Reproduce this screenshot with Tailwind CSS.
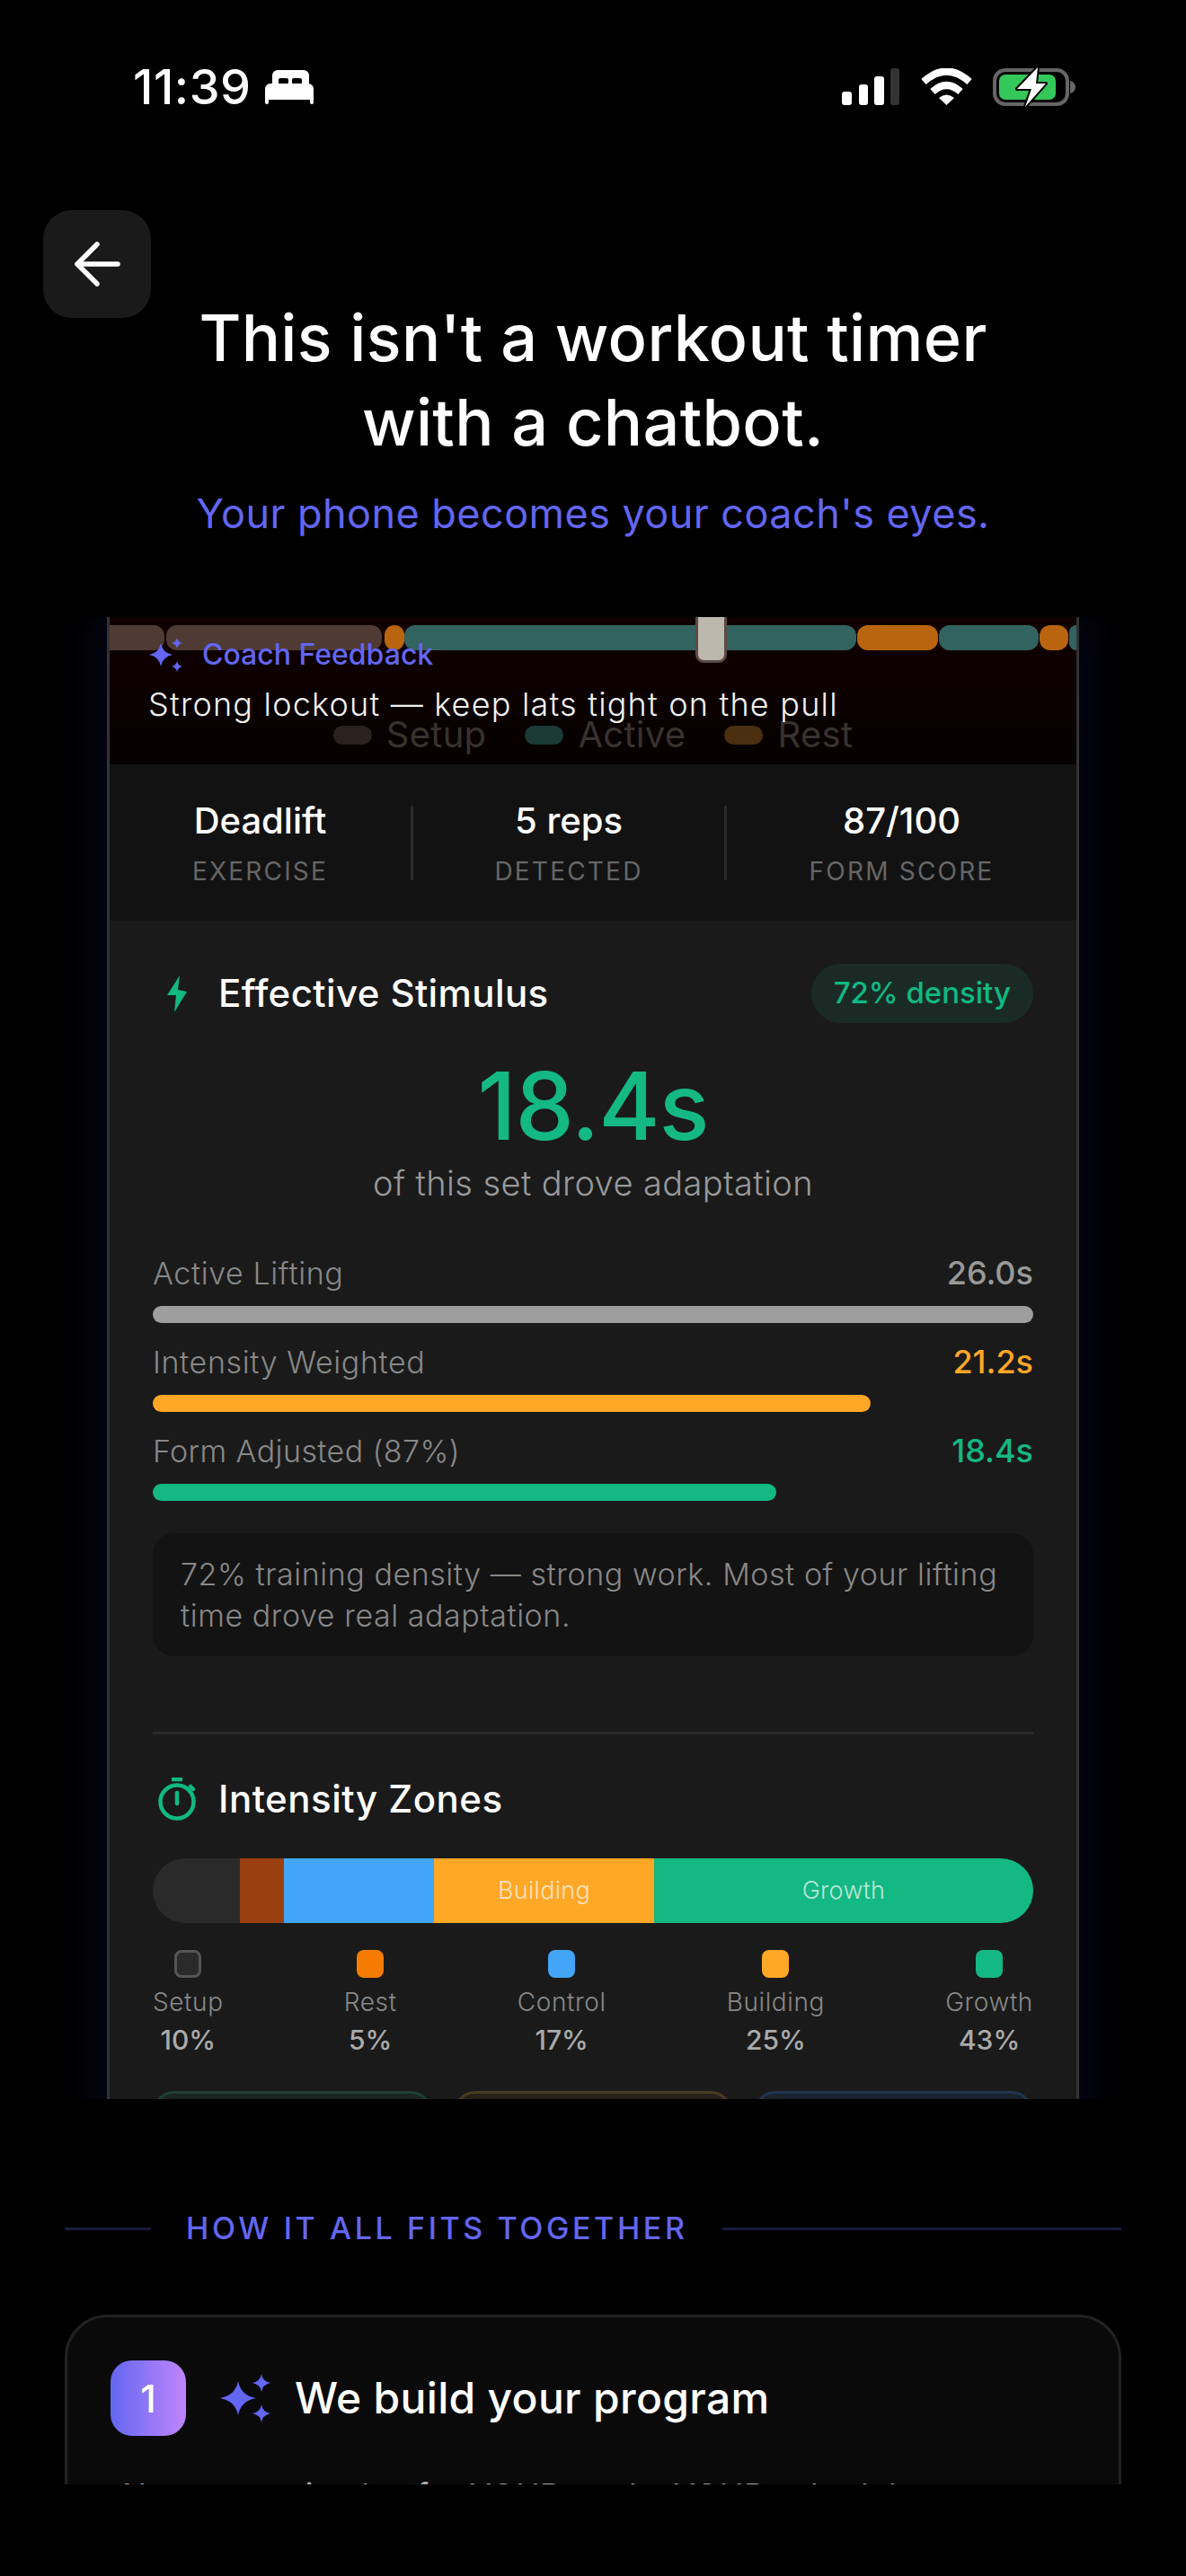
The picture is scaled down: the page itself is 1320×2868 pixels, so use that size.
<!DOCTYPE html>
<html lang="en">
<head>
    <meta charset="UTF-8">
    <title>How it works</title>
    <script src="https://cdn.jsdelivr.net/npm/@tailwindcss/browser@4"></script>
</head>
<body class="bg-black w-[1320px] h-[2868px] overflow-hidden [font-family:Inter,sans-serif] text-white">
<div class="h-[2766px] overflow-hidden">

    <!-- status bar -->
    <div class="flex items-center justify-between h-[41px] mt-[76px] pl-[148px] pr-[122px]">
        <div class="flex items-center gap-[15px]">
            <span class="text-[54px] leading-[41px] font-medium tracking-[0.500px]">11:39</span>
            <svg width="54" height="38" viewBox="0 0 54 38" fill="#fff">
                <path d="M8 17V6a6 6 0 0 1 6-6h29a6 6 0 0 1 6 6v11z"/>
                <rect x="15" y="9" width="11" height="7" rx="2" fill="#000"/>
                <rect x="30" y="9" width="11" height="7" rx="2" fill="#000"/>
                <path d="M6 15h42a6 6 0 0 1 6 6v15a2 2 0 0 1-4 0v-3H4v3a2 2 0 0 1-4 0V21a6 6 0 0 1 6-6z"/>
            </svg>
        </div>
        <div class="flex items-center">
            <svg width="64" height="41" viewBox="0 0 64 41" fill="#fff">
                <rect x="0" y="26" width="11" height="15" rx="3"/>
                <rect x="19" y="18" width="10" height="23" rx="3"/>
                <rect x="36" y="9" width="11" height="32" rx="3"/>
                <rect x="54" y="0" width="10" height="41" rx="3" fill="#333"/>
            </svg>
            <svg class="ml-[24px]" width="57" height="41" viewBox="0 0 57 41" fill="none" stroke="#fff" stroke-width="8">
                <path d="M3 15Q28.500 -8 54 15"/>
                <path d="M13 26Q28.500 12 44 26"/>
                <path d="M20 33Q28.500 26 37 33L28.500 41Z" fill="#fff" stroke="none"/>
            </svg>
            <svg class="ml-[23px]" width="93" height="46" viewBox="0 0 93 46">
                <rect x="2" y="4" width="81" height="38" rx="12" fill="none" stroke="#666" stroke-width="4"/>
                <rect x="7" y="9" width="63" height="28" rx="7" fill="#34c759"/>
                <path d="M86 16c4 1 6 4 6 7s-2 6-6 7z" fill="#666"/>
                <path d="M50 1L27 25H43L36 45L59 19H48Z" fill="#fff" stroke="#000" stroke-width="4" stroke-linejoin="round" paint-order="stroke"/>
            </svg>
        </div>
    </div>

    <!-- back button + heading -->
    <button class="flex items-center justify-center w-[120px] h-[120px] ml-[48px] mt-[117px] rounded-[32px] bg-[#1a1a1a]">
        <svg width="54" height="50" viewBox="0 0 54 50" fill="none" stroke="#fff" stroke-width="5.500" stroke-linecap="round" stroke-linejoin="round">
            <path d="M50 25H5M27 3L5 25L27 47"/>
        </svg>
    </button>
    <h1 class="-mt-[25px] text-center text-[72px] leading-[94px] font-medium tracking-[0.300px]">This isn't a workout timer<br>with a chatbot.</h1>
    <p class="mt-[27px] text-center text-[45px] leading-[56px] tracking-[0.450px] text-[#6366f1]">Your phone becomes your coach's eyes.</p>

    <!-- phone preview, scrolled -->
    <div class="h-[1650px] mx-[72px] mt-[87px] overflow-hidden">
        <div class="mx-[47px] border-x-[3px] border-[#333] shadow-[0_0_48px_8px_rgba(50,50,200,0.14)]">

            <div class="relative h-[164px] bg-gradient-to-b from-[#120000] to-[#060000]">
                <div class="absolute left-0 right-0 top-[118px] flex justify-center items-center gap-[16px] text-[40px] leading-[26px] tracking-[0.300px] text-[#38322f]">
                    <span class="w-[43px] h-[21px] rounded-full bg-[#2b221e]"></span><span class="mr-[27px]">Setup</span>
                    <span class="w-[43px] h-[21px] rounded-full bg-[#1c3a38]"></span><span class="mr-[27px]">Active</span>
                    <span class="w-[43px] h-[21px] rounded-full bg-[#4a3010]"></span><span>Rest</span>
                </div>
                <div class="relative flex h-[28px] top-[9px]">
                    <span class="w-[61px] rounded-r-[12px] bg-[#4f3b34]"></span>
                    <span class="w-[240px] ml-[2px] rounded-[12px] bg-[#4f3b34]"></span>
                    <span class="w-[22px] ml-[3px] rounded-[11px] bg-[#b9650f]"></span>
                    <span class="w-[503px] rounded-[12px] bg-[#33635f]"></span>
                    <span class="w-[90px] ml-[1px] rounded-[12px] bg-[#b9650f]"></span>
                    <span class="w-[111px] ml-[1px] rounded-[12px] bg-[#33635f]"></span>
                    <span class="w-[32px] ml-[1px] rounded-[12px] bg-[#b9650f]"></span>
                    <span class="w-[8px] ml-[1px] rounded-l-[8px] bg-[#33635f]"></span>
                </div>
                <div class="absolute left-[652px] top-[-10px] w-[35px] h-[61px] rounded-b-[9px] border-[3px] border-[#5c4a45] bg-[#bdb8ae]"></div>
                <div class="relative flex items-center gap-[21px] pl-[44px] h-[38px] -mt-[5px]">
                    <svg width="38" height="38" viewBox="0 0 38 38" fill="#6366f1">
                        <path d="M13 6Q15 17 26 19Q15 21 13 32Q11 21 0 19Q11 17 13 6Z"/>
                        <path d="M31 0Q32 5 37 6Q32 7 31 12Q30 7 25 6Q30 5 31 0Z"/>
                        <path d="M31 26Q32 31 37 32Q32 33 31 38Q30 33 25 32Q30 31 31 26Z"/>
                    </svg>
                    <span class="text-[32px] leading-[38px] font-medium text-[#6366f1]">Coach Feedback</span>
                </div>
                <p class="relative pl-[43px] mt-[14px] text-[36px] leading-[44px] tracking-[1.200px] font-light text-[#f0f0f0]">Strong lockout — keep lats tight on the pull</p>
            </div>

            <div class="flex items-center h-[174px] bg-[#121212] text-center">
                <div class="w-[338px] h-[83px] border-r-[3px] border-[#2a2a2a]">
                    <p class="-mt-[7px] text-[40px] leading-[48px] font-medium">Deadlift</p>
                    <p class="mt-[16px] text-[28px] leading-[32px] tracking-[2.200px] text-[#666]">EXERCISE</p>
                </div>
                <div class="w-[349px] h-[83px] border-r-[3px] border-[#2a2a2a]">
                    <p class="-mt-[7px] text-[40px] leading-[48px] font-medium">5 reps</p>
                    <p class="mt-[16px] text-[28px] leading-[32px] tracking-[2.200px] text-[#666]">DETECTED</p>
                </div>
                <div class="flex-1 h-[83px]">
                    <p class="-mt-[7px] text-[40px] leading-[48px] font-medium">87/100</p>
                    <p class="mt-[16px] text-[28px] leading-[32px] tracking-[2.200px] text-[#666]">FORM SCORE</p>
                </div>
            </div>

            <div class="bg-[#1a1a1a] px-[48px] pt-[48px] pb-[60px]">
                <div class="flex items-center justify-between h-[66px]">
                    <div class="flex items-center gap-[19px]">
                        <div class="flex justify-center w-[54px]">
                            <svg width="22" height="41" viewBox="0 0 22 41" fill="#10b981"><path d="M14 0L0 22H10L8 41L22 18L12 16Z"/></svg>
                        </div>
                        <h2 class="text-[42px] leading-[52px] font-medium tracking-[0.400px]">Effective Stimulus</h2>
                    </div>
                    <span class="flex items-center h-[66px] px-[25px] rounded-full bg-[#1a2b25] text-[33px] font-medium text-[#10b981]">72% density</span>
                </div>

                <p class="mt-[40px] text-center text-[104px] leading-[104px] font-medium tracking-[-1px] text-[#14b882]">18.4s</p>
                <p class="mt-[10px] text-center text-[38px] leading-[48px] tracking-[0.400px] font-light text-[#999]">of this set drove adaptation</p>

                <div class="mt-[54px] flex items-center justify-between h-[44px]">
                    <span class="text-[34px] font-light tracking-[0.600px] text-[#888]">Active Lifting</span>
                    <span class="text-[36px] font-medium text-[#999]">26.0s</span>
                </div>
                <div class="mt-[15px] h-[19px] rounded-full bg-[#9e9e9e]"></div>

                <div class="mt-[21px] flex items-center justify-between h-[44px]">
                    <span class="text-[34px] font-light tracking-[0.600px] text-[#888]">Intensity Weighted</span>
                    <span class="text-[36px] font-medium text-[#ffa726]">21.2s</span>
                </div>
                <div class="mt-[15px] h-[19px] w-[799px] rounded-full bg-[#ffa726]"></div>

                <div class="mt-[21px] flex items-center justify-between h-[44px]">
                    <span class="text-[34px] font-light tracking-[0.400px] text-[#888]">Form Adjusted (87%)</span>
                    <span class="text-[36px] font-medium text-[#14b882]">18.4s</span>
                </div>
                <div class="mt-[15px] h-[19px] w-[694px] rounded-full bg-[#14b882]"></div>

                <p class="mt-[36px] h-[137px] px-[31px] pt-[23px] rounded-[24px] bg-[#131313] text-[34px] leading-[46px] tracking-[0.550px] font-light text-[#888]">72% training density — strong work. Most of your lifting time drove real adaptation.</p>

                <div class="mt-[84px] h-[3px] bg-[#2a2a2a]"></div>

                <div class="mt-[46px] flex items-center gap-[19px]">
                    <div class="flex justify-center w-[54px]">
                        <svg width="42" height="48" viewBox="0 0 42 48" fill="none" stroke="#10b981" stroke-width="4.500" stroke-linecap="round">
                            <circle cx="21" cy="27" r="18.500"/>
                            <path d="M21 17V29"/>
                            <path d="M15 2H27" stroke-linecap="butt"/>
                            <path d="M36 10L39 13"/>
                        </svg>
                    </div>
                    <h2 class="text-[42px] leading-[52px] font-medium tracking-[0.500px]">Intensity Zones</h2>
                </div>

                <div class="mt-[40px] flex h-[72px] rounded-full overflow-hidden text-[27px] tracking-[0.300px] font-light text-white/70">
                    <div class="w-[97px] bg-[#2a2a2a]"></div>
                    <div class="w-[49px] bg-[#9a3f0f]"></div>
                    <div class="w-[167px] bg-[#42a5f5]"></div>
                    <div class="w-[245px] flex items-center justify-center bg-[#ffa726]">Building</div>
                    <div class="flex-1 flex items-center justify-center bg-[#14b882]">Growth</div>
                </div>

                <div class="mt-[30px] flex justify-between text-center">
                    <div class="flex flex-col items-center">
                        <span class="w-[30px] h-[31px] rounded-[8px] bg-[#2a2a2a] border-[3px] border-[#555]"></span>
                        <span class="mt-[9px] text-[28px] leading-[36px] tracking-[0.600px] font-light text-[#888]">Setup</span>
                        <span class="mt-[4px] text-[30px] leading-[40px] font-medium text-[#aaa]">10%</span>
                    </div>
                    <div class="flex flex-col items-center">
                        <span class="w-[30px] h-[31px] rounded-[8px] bg-[#f57c00]"></span>
                        <span class="mt-[9px] text-[28px] leading-[36px] tracking-[0.600px] font-light text-[#888]">Rest</span>
                        <span class="mt-[4px] text-[30px] leading-[40px] font-medium text-[#aaa]">5%</span>
                    </div>
                    <div class="flex flex-col items-center">
                        <span class="w-[30px] h-[31px] rounded-[8px] bg-[#42a5f5]"></span>
                        <span class="mt-[9px] text-[28px] leading-[36px] tracking-[0.600px] font-light text-[#888]">Control</span>
                        <span class="mt-[4px] text-[30px] leading-[40px] font-medium text-[#aaa]">17%</span>
                    </div>
                    <div class="flex flex-col items-center">
                        <span class="w-[30px] h-[31px] rounded-[8px] bg-[#ffa726]"></span>
                        <span class="mt-[9px] text-[28px] leading-[36px] tracking-[0.600px] font-light text-[#888]">Building</span>
                        <span class="mt-[4px] text-[30px] leading-[40px] font-medium text-[#aaa]">25%</span>
                    </div>
                    <div class="flex flex-col items-center">
                        <span class="w-[30px] h-[31px] rounded-[8px] bg-[#14b882]"></span>
                        <span class="mt-[9px] text-[28px] leading-[36px] tracking-[0.600px] font-light text-[#888]">Growth</span>
                        <span class="mt-[4px] text-[30px] leading-[40px] font-medium text-[#aaa]">43%</span>
                    </div>
                </div>

                <div class="mt-[37px] grid grid-cols-3 gap-[24px]">
                    <div class="h-[120px] rounded-[24px] border-[3px] border-[#1f4035] bg-[#1b2422]"></div>
                    <div class="h-[120px] rounded-[24px] border-[3px] border-[#4a3a20] bg-[#25211b]"></div>
                    <div class="h-[120px] rounded-[24px] border-[3px] border-[#1f3550] bg-[#1b2229]"></div>
                </div>
            </div>
        </div>
    </div>

    <!-- how it fits together -->
    <div class="mx-[72px] mt-[122px] flex items-center h-[44px]">
        <span class="w-[96px] h-[3px] bg-[#6366f1]/25"></span>
        <span class="ml-[39px] mr-[38px] text-[34px] leading-[44px] tracking-[3.600px] font-medium text-[#6366f1]">HOW IT ALL FITS TOGETHER</span>
        <span class="flex-1 h-[3px] bg-[#6366f1]/25"></span>
    </div>

    <div class="mx-[72px] mt-[74px] border-[3px] border-[#222] rounded-[48px] bg-[#0a0a0a] px-[48px] pt-[48px] pb-[48px]">
        <div class="flex items-center">
            <div class="flex items-center justify-center w-[84px] h-[84px] rounded-[24px] bg-gradient-to-r from-[#6366f1] to-[#c084fc] text-[42px] font-medium">1</div>
            <svg class="ml-[38px] mr-[27px]" width="56" height="54" viewBox="0 0 56 54" fill="#6366f1">
                <path d="M20 8Q23 24 40 27Q23 30 20 46Q17 30 0 27Q17 24 20 8Z"/>
                <path d="M46 0Q47 8 56 10Q47 12 46 20Q45 12 36 10Q45 8 46 0Z"/>
                <path d="M46 34Q47 42 56 44Q47 46 46 54Q45 46 36 44Q45 42 46 34Z"/>
            </svg>
            <h3 class="text-[48px] leading-[60px] font-medium tracking-[0.300px]">We build your program</h3>
        </div>
        <p class="mt-[41px] ml-[13px] text-[36px] leading-[50px] tracking-[0.300px] text-[#aaa]">Not a generic plan for YOUR goals, YOUR schedule</p>
    </div>
</div>
</body>
</html>
